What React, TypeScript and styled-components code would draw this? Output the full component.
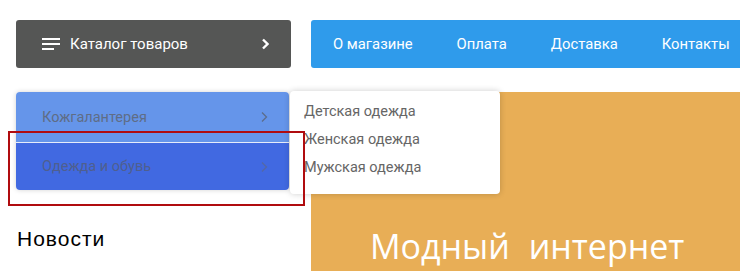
import React from 'react';
import styled, { createGlobalStyle } from 'styled-components';

const GlobalStyle = createGlobalStyle`
  html, body {
    margin: 0;
    padding: 0;
    background: #fff;
    overflow: hidden;
  }
  body {
    font-family: Roboto, 'Liberation Sans', sans-serif;
  }
`;

const Page = styled.div`
  position: relative;
  width: 740px;
  height: 271px;
  padding: 20px 0 0 16px;
  box-sizing: border-box;
  overflow: hidden;
`;

const Header = styled.div`
  display: flex;
  gap: 20px;
  height: 48px;
`;

const CatalogButton = styled.div`
  display: flex;
  align-items: center;
  width: 275px;
  flex-shrink: 0;
  padding: 0 22px 0 26px;
  box-sizing: border-box;
  background: #555655;
  border-radius: 3px;
  color: #fff;
  font-size: 15px;
`;

const CatalogLabel = styled.span`
  flex: 1;
  margin-left: 10px;
`;

const NavBar = styled.nav`
  display: flex;
  align-items: center;
  flex: 1;
  min-width: 500px;
  background: #2f9beb;
  border-radius: 3px 0 0 3px;
`;

const NavItem = styled.a`
  padding: 0 22px;
  color: #fff;
  font-size: 14.8px;
  white-space: nowrap;
`;

const Main = styled.div`
  display: grid;
  grid-template-columns: 275px 1fr;
  gap: 20px;
  margin-top: 24px;
`;

const Sidebar = styled.div`
  position: relative;
`;

const Menu = styled.div`
  position: relative;
  z-index: 2;
  border-radius: 4px;
  width: 273px;
  box-shadow: 0 0 5px rgba(0, 0, 0, 0.18);
`;

const MenuItem = styled.div<{ $tone: 'light' | 'dark' }>`
  display: flex;
  align-items: center;
  justify-content: space-between;
  height: ${(p) => (p.$tone === 'light' ? '50px' : '47px')};
  padding: 0 21px 0 26px;
  background: ${(p) => (p.$tone === 'light' ? '#6595ea' : '#4169e1')};
  border-radius: ${(p) => (p.$tone === 'light' ? '4px 4px 0 0' : '0 0 4px 4px')};
  border-bottom: ${(p) => (p.$tone === 'light' ? '1px solid #e6ecfa' : 'none')};
  color: ${(p) => (p.$tone === 'light' ? '#5f6d86' : '#4f5f8e')};
  font-size: 14.5px;
`;

const Submenu = styled.div`
  position: absolute;
  left: 274px;
  top: -1px;
  width: 210px;
  padding: 7px 14px 12px;
  box-sizing: border-box;
  background: #fff;
  border-radius: 4px;
  box-shadow: 0 0 6px rgba(0, 0, 0, 0.2);
`;

const SubItem = styled.div`
  line-height: 28px;
  font-size: 14.5px;
  color: #666;
`;

const NewsTitle = styled.h2`
  margin: 37px 0 0 1px;
  font-family: 'Liberation Sans', Arial, sans-serif;
  font-weight: 400;
  font-size: 21px;
  letter-spacing: 1px;
  color: #000;
`;

const Banner = styled.div`
  height: 200px;
  background: #e8ae56;
  padding: 131px 0 0 59px;
  box-sizing: border-box;
`;

const BannerTitle = styled.div`
  font-family: 'Open Sans', sans-serif;
  font-size: 34px;
  color: #fff;
  word-spacing: 10px;
  white-space: nowrap;
`;

const Highlight = styled.div`
  position: absolute;
  left: 8px;
  top: 131px;
  width: 297px;
  height: 75px;
  box-sizing: border-box;
  border: 2px solid #b00c0f;
  z-index: 5;
  pointer-events: none;
`;

const Burger = () => (
  <svg width="18" height="12" viewBox="0 0 18 12">
    <rect x="0" y="0" width="18" height="2" fill="#fff" />
    <rect x="0" y="5" width="18" height="2" fill="#fff" />
    <rect x="0" y="10" width="12" height="2" fill="#fff" />
  </svg>
);

const Chevron = ({ color, width }: { color: string; width: number }) => (
  <svg width="8" height="12" viewBox="0 0 8 12">
    <polyline points="2,1.5 6.5,6 2,10.5" fill="none" stroke={color} strokeWidth={width} />
  </svg>
);

const navLinks = ['О магазине', 'Оплата', 'Доставка', 'Контакты'];
const clothes = ['Детская одежда', 'Женская одежда', 'Мужская одежда'];

export default function App() {
  return (
    <>
      <GlobalStyle />
      <Page>
        <Header>
          <CatalogButton>
            <Burger />
            <CatalogLabel>Каталог товаров</CatalogLabel>
            <Chevron color="#fff" width={2.4} />
          </CatalogButton>
          <NavBar>
            {navLinks.map((l) => (
              <NavItem key={l}>{l}</NavItem>
            ))}
          </NavBar>
        </Header>
        <Main>
          <Sidebar>
            <Menu>
              <MenuItem $tone="light">
                Кожгалантерея
                <Chevron color="#5c6d8c" width={1.3} />
              </MenuItem>
              <MenuItem $tone="dark">
                Одежда и обувь
                <Chevron color="#5468a6" width={1.3} />
              </MenuItem>
              <Submenu>
                {clothes.map((c) => (
                  <SubItem key={c}>{c}</SubItem>
                ))}
              </Submenu>
            </Menu>
            <NewsTitle>Новости</NewsTitle>
          </Sidebar>
          <Banner>
            <BannerTitle>Модный интернет</BannerTitle>
          </Banner>
        </Main>
        <Highlight />
      </Page>
    </>
  );
}
